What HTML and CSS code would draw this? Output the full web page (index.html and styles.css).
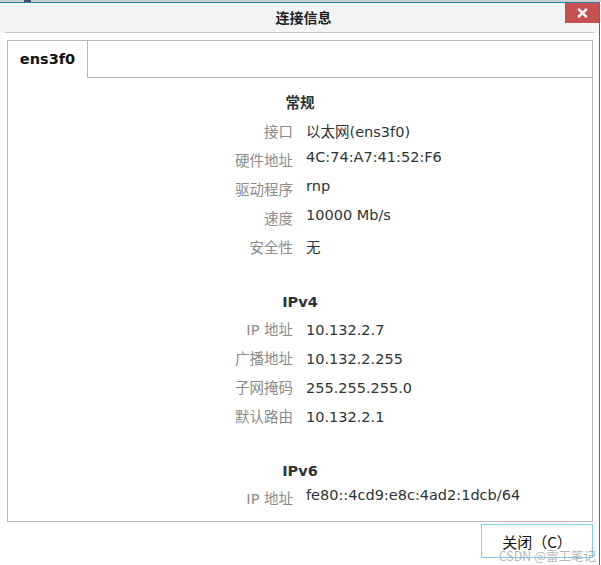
FILE: index.html
```html
<!doctype html>
<html lang="zh-CN">
<head>
    <meta charset="utf-8">
    <meta name="viewport" content="width=device-width, initial-scale=1">
    <title>连接信息</title>
    <link rel="stylesheet" href="styles.css">
</head>
<body>

<!-- Край окна позади диалога -->
<div class="desk"><span class="desk-icon"></span></div>

<div class="dialog" role="dialog" aria-labelledby="dialog-title">
    <!-- Заголовок окна -->
    <div class="titlebar">
        <div class="titlebar-row">
            <span></span>
            <h1 id="dialog-title" class="title">连接信息</h1>
            <button class="close-btn" type="button" aria-label="关闭">
                <svg width="11" height="10" viewBox="0 0 11 10" aria-hidden="true">
                    <path d="M1.2 0.8 9.8 9.2M9.8 0.8 1.2 9.2" stroke="#fff" stroke-width="2.4" fill="none"/>
                </svg>
            </button>
        </div>
        <div class="titlebar-rule"></div>
    </div>

    <div class="dialog-body">
        <div class="notebook">
            <div class="tabs" role="tablist">
                <div class="tab tab-active" role="tab" aria-selected="true">ens3f0</div>
                <div class="tabs-fill"></div>
            </div>

            <div class="page" role="tabpanel">
                <!-- Общие сведения -->
                <section class="info">
                    <h2 class="info-heading">常规</h2>
                    <span class="info-label">接口</span>
                    <span class="info-value">以太网(ens3f0)</span>
                    <span class="info-label">硬件地址</span>
                    <span class="info-value">4C:74:A7:41:52:F6</span>
                    <span class="info-label">驱动程序</span>
                    <span class="info-value">rnp</span>
                    <span class="info-label">速度</span>
                    <span class="info-value">10000 Mb/s</span>
                    <span class="info-label">安全性</span>
                    <span class="info-value">无</span>
                </section>

                <!-- IPv4 -->
                <section class="info info-baseline">
                    <h2 class="info-heading">IPv4</h2>
                    <span class="info-label">IP 地址</span>
                    <span class="info-value">10.132.2.7</span>
                    <span class="info-label">广播地址</span>
                    <span class="info-value">10.132.2.255</span>
                    <span class="info-label">子网掩码</span>
                    <span class="info-value">255.255.255.0</span>
                    <span class="info-label">默认路由</span>
                    <span class="info-value">10.132.2.1</span>
                </section>

                <!-- IPv6 -->
                <section class="info">
                    <h2 class="info-heading">IPv6</h2>
                    <span class="info-label">IP 地址</span>
                    <span class="info-value">fe80::4cd9:e8c:4ad2:1dcb/64</span>
                </section>
            </div>
        </div>

        <div class="actions">
            <button class="btn" type="button">关闭（C）</button>
        </div>
    </div>

    <span class="watermark">CSDN @雷工笔记</span>
</div>

</body>
</html>
```

FILE: styles.css
```css
:root {
    --frame-border: #b9b9b9; /* рамка вкладок */
    --accent: #2180a6; /* рамка окна */
    --text: #2e3436;
    --muted: #8b8b8b;
}

* {
    box-sizing: border-box;
}

body {
    margin: 0;
    width: 601px;
    height: 565px;
    overflow: hidden;
    background: #fff;
    font-family: "DejaVu Sans", "Noto Sans CJK SC", sans-serif;
    font-size: 14.5px;
    color: var(--text);
}

/* Полоска окна на заднем плане */
.desk {
    height: 2px;
    background: #cdcfd1;
}

.desk-icon {
    display: block;
    width: 7px;
    height: 2px;
    margin-left: 24px;
    background: #4a4a6a;
}

.dialog {
    position: relative;
    width: 600px;
    height: 563px;
    border-top: 1px solid var(--accent);
    border-right: 1px solid var(--accent);
    background: #fff;
}

/* Заголовок */
.titlebar {
    background: #f3f4f6;
}

.titlebar-row {
    display: grid;
    grid-template-columns: 1fr auto 1fr;
    height: 29px;
}

.title {
    margin: 0;
    padding-left: 8px;
    align-self: center;
    font-family: "Noto Sans CJK SC", sans-serif;
    font-size: 14px;
    font-weight: 700;
    line-height: 29px;
    color: #1e1e1e;
}

.close-btn {
    justify-self: end;
    align-self: start;
    display: flex;
    align-items: center;
    justify-content: center;
    width: 34px;
    height: 20px;
    padding: 0;
    border: 0;
    background: #c75050;
}

.titlebar-rule {
    height: 1px;
    margin: 0 5px;
    background: #c8c8c8;
}

.dialog-body {
    padding: 7px 6px 0 7px;
}

/* Блокнот с вкладками */
.notebook {
    height: 482px;
    border: 1px solid var(--frame-border);
    background: #fff;
}

.tabs {
    display: flex;
    height: 37px;
}

.tab {
    width: 80px;
    border-right: 1px solid var(--frame-border);
    text-align: center;
    font-weight: 700;
    line-height: 37px;
    color: #111;
}

.tabs-fill {
    flex: 1;
    border-bottom: 1px solid var(--frame-border);
}

.page {
    display: flex;
    flex-direction: column;
    gap: 37px;
    padding-top: 13px;
}

/* Сетка "подпись - значение" */
.info {
    display: grid;
    grid-template-columns: 285px 1fr;
    column-gap: 13px;
    row-gap: 8px;
    align-items: start;
}

.info-baseline {
    align-items: baseline;
}

.info-heading {
    grid-column: 1 / -1;
    margin: 0;
    font-size: inherit;
    font-weight: 700;
    text-align: center;
}

.info-label {
    text-align: right;
    color: var(--muted);
}

.info-value {
    color: var(--text);
}

/* Кнопки диалога */
.actions {
    display: flex;
    justify-content: flex-end;
    padding-top: 2px;
}

.btn {
    width: 112px;
    height: 34px;
    padding: 0;
    border: 1px solid #7fcdf2;
    background: #fff;
    font-family: "Noto Sans CJK SC", sans-serif;
    font-size: 15px;
    color: #111;
}

.watermark {
    position: absolute;
    right: 3px;
    bottom: 3px;
    font-family: "Noto Sans CJK SC", sans-serif;
    font-size: 12.5px;
    line-height: 1;
    color: rgba(160, 160, 160, 0.75);
    pointer-events: none;
}
```
